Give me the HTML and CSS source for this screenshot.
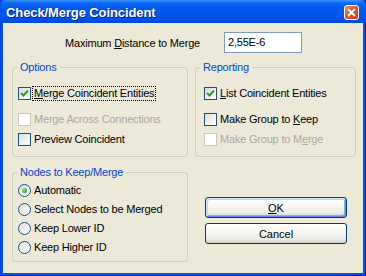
FILE: index.html
```html
<!DOCTYPE html>
<html lang="en">

<head>
    <meta charset="UTF-8">
    <title>Check/Merge Coincident</title>
    <link rel="stylesheet" href="styles.css">
</head>

<body>
    <div class="window">
        <div class="titlebar">
            <span class="title">Check/Merge Coincident</span>
            <span class="close">
                <svg width="9" height="9" viewBox="0 0 9 9">
                    <path d="M1 1 L8 8 M8 1 L1 8" stroke="#fff" stroke-width="2" />
                </svg>
            </span>
        </div>

        <div class="content">
            <div class="distance-row">
                <label class="distance-label">Maximum <u>D</u>istance to Merge</label>
                <div class="textbox">2,55E-6</div>
            </div>

            <div class="groups">
                <fieldset class="group options">
                    <legend>Options</legend>
                    <div class="opt first">
                        <span class="box"><svg width="11" height="11" viewBox="0 0 11 11"><path d="M2 5 L4.5 7.5 L9 2.5" fill="none" stroke="#21A121" stroke-width="2" /></svg></span>
                        <span class="focus"><u>M</u>erge Coincident Entities</span>
                    </div>
                    <div class="opt disabled">
                        <span class="box"></span>
                        <span>Merge Across Connections</span>
                    </div>
                    <div class="opt last">
                        <span class="box"></span>
                        <span>Preview Coincident</span>
                    </div>
                </fieldset>

                <fieldset class="group reporting">
                    <legend>Reporting</legend>
                    <div class="opt first">
                        <span class="box"><svg width="11" height="11" viewBox="0 0 11 11"><path d="M2 5 L4.5 7.5 L9 2.5" fill="none" stroke="#21A121" stroke-width="2" /></svg></span>
                        <span><u>L</u>ist Coincident Entities</span>
                    </div>
                    <div class="opt">
                        <span class="box"></span>
                        <span>Make Group to <u>K</u>eep</span>
                    </div>
                    <div class="opt disabled last">
                        <span class="box"></span>
                        <span>Make Group to M<u>e</u>rge</span>
                    </div>
                </fieldset>

                <fieldset class="group nodes">
                    <legend>Nodes to Keep/Merge</legend>
                    <div class="opt radio-row first">
                        <span class="radio"><span class="dot"></span></span>
                        <span>Automatic</span>
                    </div>
                    <div class="opt radio-row">
                        <span class="radio"></span>
                        <span>Select Nodes to be Merged</span>
                    </div>
                    <div class="opt radio-row">
                        <span class="radio"></span>
                        <span>Keep Lower ID</span>
                    </div>
                    <div class="opt radio-row">
                        <span class="radio"></span>
                        <span>Keep Higher ID</span>
                    </div>
                </fieldset>

                <div class="buttons">
                    <button class="btn default"><u>O</u>K</button>
                    <button class="btn">Cancel</button>
                </div>
            </div>
        </div>
    </div>
</body>

</html>
```

FILE: styles.css
```css
* {
    box-sizing: border-box;
}

body {
    margin: 0;
    background-color: #ECE9D8;
    font-family: "Liberation Sans", Arial, sans-serif;
    font-size: 11px;
    letter-spacing: -0.2px;
    color: #000;
}

u {
    text-decoration: underline;
    text-underline-offset: 1px;
}

.window {
    width: 366px;
    height: 276px;
    display: flex;
    flex-direction: column;
    background: linear-gradient(to right, #0831D9 0, #0055EA 1px, #0055EA 365px, #001DA0 365px);
    border-bottom: 1px solid #001DA0;
}

.titlebar {
    height: 23px;
    display: flex;
    align-items: center;
    justify-content: space-between;
    padding: 1px 7px 0 6px;
    background: linear-gradient(to bottom, #3D95FF 0, #0A66F5 3px, #0058EE 9px, #0055EA 17px, #0049DB 23px);
    border-radius: 6px 6px 0 0;
    color: #fff;
}

.title {
    font-weight: bold;
    font-size: 13px;
    letter-spacing: -0.1px;
    text-shadow: 1px 1px #0A1883;
}

.close {
    width: 15px;
    height: 15px;
    display: flex;
    align-items: center;
    justify-content: center;
    border: 1px solid #fff;
    border-radius: 3px;
    background: linear-gradient(135deg, #EC8B6B 0, #E2562F 45%, #C8391A 100%);
}

.content {
    flex: 1;
    margin: 0 3px 2px;
    padding: 9px 0 0 9px;
    background-color: #ECE9D8;
}

.distance-row {
    display: flex;
    align-items: center;
    height: 21px;
}

.distance-label {
    width: 188px;
    margin-right: 24px;
    text-align: right;
}

.textbox {
    width: 78px;
    height: 21px;
    padding: 3px 0 0 3px;
    border: 1px solid #7F9DB9;
    background-color: #fff;
}

.groups {
    display: grid;
    grid-template-columns: 176px 161px;
    grid-template-rows: 96px 96px;
    column-gap: 7px;
    row-gap: 9px;
    margin-top: 8px;
}

.group {
    margin: 0;
    padding: 0 0 0 4px;
    min-width: 0;
    border: 1px solid #D0D0BF;
    border-radius: 3px;
}

.group legend {
    padding: 0 3px;
    line-height: 13px;
    color: #0046D5;
}

.opt {
    display: flex;
    align-items: center;
    gap: 3px;
    height: 13px;
    line-height: 13px;
    margin-top: 13px;
    margin-left: 1px;
    white-space: nowrap;
}

.opt.last {
    margin-top: 7px;
}

.reporting .opt {
    margin-left: 4px;
}

.box {
    width: 13px;
    height: 13px;
    flex: none;
    display: flex;
    align-items: center;
    justify-content: center;
    border: 1px solid #1C5180;
    background: linear-gradient(135deg, #DCDCD7 0, #F2F2EE 60%, #fff 100%);
}

.opt.disabled {
    color: #ACA899;
}

.opt.disabled .box {
    border-color: #CAC8BB;
    background: #fff;
}

.focus {
    outline: 1px dotted #000;
    outline-offset: 0;
    padding: 0 1px;
    margin-left: -1px;
}

.opt.radio-row {
    margin-top: 6px;
}

.opt.radio-row.first {
    margin-top: 5px;
}

.radio {
    width: 13px;
    height: 13px;
    flex: none;
    display: flex;
    align-items: center;
    justify-content: center;
    border: 1px solid #1C5180;
    border-radius: 50%;
    background: linear-gradient(135deg, #DCDCD7 0, #F2F2EE 60%, #fff 100%);
}

.dot {
    width: 5px;
    height: 5px;
    border-radius: 50%;
    background: radial-gradient(circle at 35% 35%, #8FE68B 0, #21A121 80%);
}

.buttons {
    display: flex;
    flex-direction: column;
    gap: 5px;
    padding: 31px 0 0 10px;
}

.btn {
    width: 142px;
    height: 21px;
    padding: 0;
    border: 1px solid #003C74;
    border-radius: 3px;
    background: linear-gradient(to bottom, #fff 0, #F4F4F0 50%, #ECEBE6 80%, #D6D0C5 100%);
    font: inherit;
    color: #000;
}

.btn.default {
    box-shadow: inset 1px 1px 0 #CEE7FF, inset -1px -1px 0 #6982EE, inset 2px 2px 0 #BCD4F6, inset -2px -2px 0 #89ADE4;
}
```
